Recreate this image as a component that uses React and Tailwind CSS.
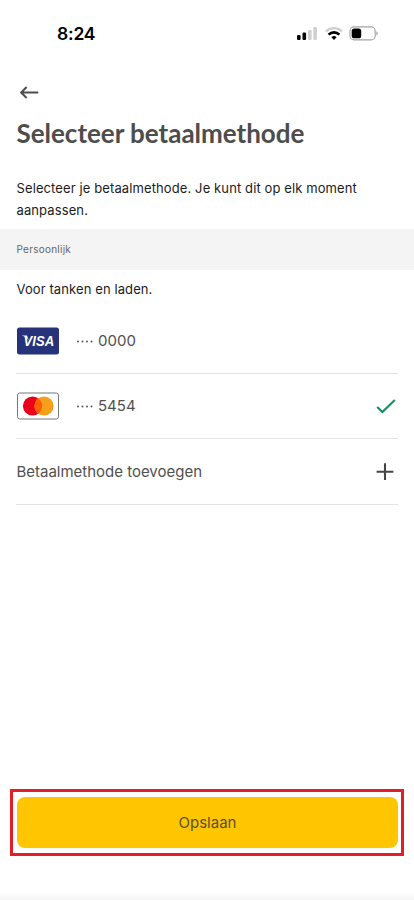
import React from "react";

const StatusBar = () => (
  <div className="flex h-[67px] items-center justify-between pl-[57px] pr-[35px]">
    <span className="text-[17.5px] font-semibold leading-6 tracking-[-0.2px] text-black">8:24</span>
    <div className="flex items-center">
      <svg width="21" height="13" viewBox="0 0 21 13">
        <rect x="0" y="8" width="3.6" height="5" rx="1.2" fill="#000" />
        <rect x="5.5" y="5.5" width="3.6" height="7.5" rx="1.2" fill="#000" />
        <rect x="11" y="3" width="3.6" height="10" rx="1.2" fill="#cfcfcf" />
        <rect x="16.3" y="0" width="3.6" height="13" rx="1.2" fill="#cfcfcf" />
      </svg>
      <svg className="ml-[7px]" width="18" height="13" viewBox="0 0 18 13" fill="none">
        <path d="M1 4.4a11.4 11.4 0 0 1 16 0" stroke="#cfcfcf" strokeWidth="2.3" />
        <path d="M3.6 7.6a7.6 7.6 0 0 1 10.8 0" stroke="#000" strokeWidth="2.6" />
        <path d="M6.4 10.2a3.7 3.7 0 0 1 5.2 0L9 12.9z" fill="#000" />
      </svg>
      <svg className="ml-[6px]" width="30" height="15" viewBox="0 0 30 15">
        <rect x="1" y="0.9" width="25.2" height="13" rx="4" fill="#fff" stroke="#a3a3a3" strokeWidth="1.1" />
        <rect x="2.7" y="2.5" width="9.5" height="9.8" rx="2.6" fill="#000" />
        <path d="M27.4 5.2c1.8.7 1.8 3.7 0 4.4z" fill="#a3a3a3" />
      </svg>
    </div>
  </div>
);

const VisaCard = () => (
  <svg width="44" height="28" viewBox="0 0 44 28">
    <rect x="1" y="0.5" width="42" height="27" rx="2.5" fill="#26337a" />
    <path d="M6.2 8.4h4.8l1.8 5.4c-1.2-2.5-3.2-4.3-6.6-5z" fill="#fff" />
    <text
      x="7.6"
      y="18.9"
      fill="#fff"
      fontFamily="Liberation Sans, sans-serif"
      fontSize="15"
      fontStyle="italic"
      fontWeight="700"
      textLength="30.5"
      lengthAdjust="spacingAndGlyphs"
    >
      VISA
    </text>
  </svg>
);

const MasterCard = () => (
  <svg width="44" height="28" viewBox="0 0 44 28">
    <rect x="1.5" y="1" width="41" height="26" rx="2.2" fill="#fff" stroke="#777" />
    <circle cx="16.5" cy="14" r="9.6" fill="#eb001b" />
    <circle cx="28" cy="14" r="9.6" fill="#f79e1b" />
    <path d="M22.25 6.3a9.6 9.6 0 0 1 0 15.4a9.6 9.6 0 0 1 0-15.4z" fill="#ff5f00" />
  </svg>
);

const Dots = () => (
  <svg width="17" height="3" viewBox="0 0 17 3" fill="#505050">
    <circle cx="2" cy="1.5" r="0.95" />
    <circle cx="6.5" cy="1.5" r="0.95" />
    <circle cx="11" cy="1.5" r="0.95" />
    <circle cx="15.5" cy="1.5" r="0.95" />
  </svg>
);

const cards = [
  { id: 1, logo: <VisaCard />, digits: "0000", selected: false },
  { id: 2, logo: <MasterCard />, digits: "5454", selected: true },
];

const App = () => {
  return (
    <div className="flex h-[900px] w-full flex-col overflow-hidden bg-white font-['Inter',sans-serif] text-[#1c1c1c]">
      <StatusBar />

      <div className="px-[16.5px] pt-[17px]">
        <button className="block pl-[3px]" aria-label="Terug">
          <svg width="20" height="16" viewBox="0 0 20 16" fill="none" stroke="#4d4d4d" strokeWidth="1.9">
            <path d="M18.3 8.5H1.5M6.6 3L1.2 8.5l5.4 5.5" />
          </svg>
        </button>
        <h1 className="mt-[17px] whitespace-nowrap font-['Lato',sans-serif] text-[26px] font-bold leading-8 tracking-[-0.02px] text-[#4d4d4d]">
          Selecteer betaalmethode
        </h1>
        <p className="mt-[29px] text-[13px] leading-[21.7px] tracking-[0.11px]">
          Selecteer je betaalmethode. Je kunt dit op elk moment
          <br />
          aanpassen.
        </p>
      </div>

      <div className="mt-[8px] flex h-[41px] items-center bg-[#f4f4f4] px-[16.5px] text-[10px] tracking-[0.25px] text-[#666]">
        Persoonlijk
      </div>

      <div className="px-4">
        <p className="pl-[0.5px] pt-2 text-[13px] leading-[22px] tracking-[0.1px]">
          Voor tanken en laden.
        </p>
        <ul className="mt-[8px] text-[15px] text-[#505050]">
          {cards.map((card) => (
            <li key={card.id} className="flex h-[65.5px] items-center border-b border-[#e3e3e3]">
              {card.logo}
              <span className="ml-4 flex items-center gap-[5px] pt-px">
                <Dots />
                {card.digits}
              </span>
              {card.selected && (
                <svg className="ml-auto mr-[2.5px]" width="20" height="16" viewBox="0 0 20 16" fill="none" stroke="#11915f" strokeWidth="2.1">
                  <path d="M1.2 9l5.2 5L18.8 2" />
                </svg>
              )}
            </li>
          ))}
          <li className="flex h-[65.5px] items-center justify-between border-b border-[#e3e3e3]">
            <span className="pl-[0.5px] pt-[2px] tracking-[-0.01px]">Betaalmethode toevoegen</span>
            <svg className="mr-1" width="18" height="18" viewBox="0 0 18 18" stroke="#444" strokeWidth="2.1">
              <path d="M9 .3v16.8M.6 8.7h16.8" />
            </svg>
          </li>
        </ul>
      </div>

      <div className="mx-[10px] mt-auto h-[67px] border-[3px] border-[#e31e29] py-[5px] pl-[4px] pr-[3px]">
        <button className="h-[51px] w-full rounded-lg bg-[#ffc600] pt-px text-[15px] text-[#5c5130]">
          Opslaan
        </button>
      </div>
      <div className="mt-[36px] h-2 shrink-0 bg-gradient-to-b from-white to-[#f5f5f5]" />
    </div>
  );
};

export default App;
